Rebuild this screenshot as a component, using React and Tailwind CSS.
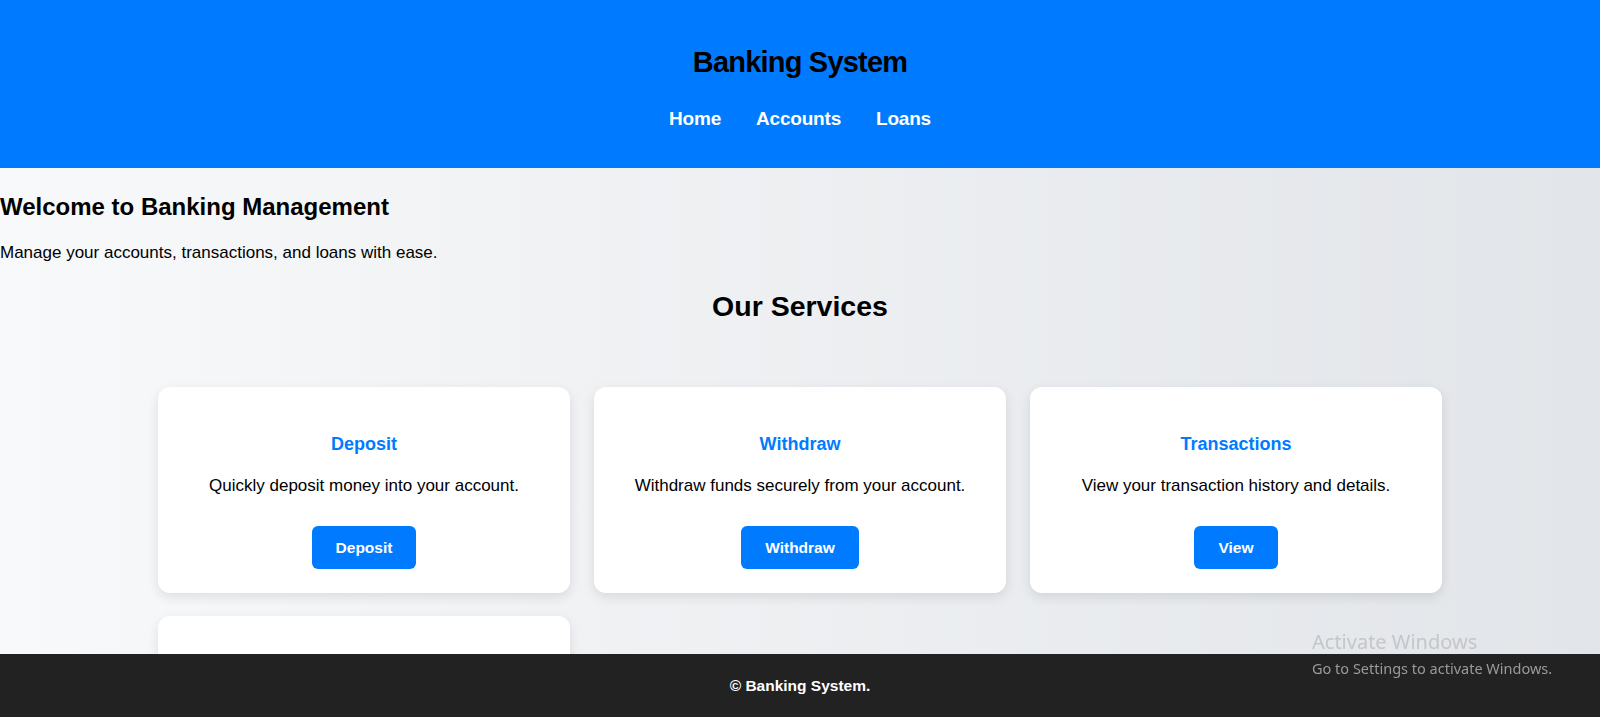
import React from "react";

const services = [
  {
    title: "Deposit",
    text: "Quickly deposit money into your account.",
    action: "Deposit",
  },
  {
    title: "Withdraw",
    text: "Withdraw funds securely from your account.",
    action: "Withdraw",
  },
  {
    title: "Transactions",
    text: "View your transaction history and details.",
    action: "View",
  },
  {
    title: "Loans",
    text: "Apply for loans and track your repayments.",
    action: "Apply",
  },
];

function ServiceCard({ title, text, action }) {
  return (
    <div className="h-[206px] bg-white rounded-[12px] shadow-[0_4px_12px_rgba(0,0,0,0.1)] flex flex-col items-center pt-[46px] text-center">
      <h3 className="text-[18px] leading-[22px] font-bold text-[#007bff]">
        {title}
      </h3>
      <p className="mt-[21px] text-[17px] leading-[20px] text-black">{text}</p>
      <button className="mt-[30px] h-[43px] px-6 rounded-[6px] bg-[#007bff] text-white text-[15.5px] font-bold">
        {action}
      </button>
    </div>
  );
}

export default function App() {
  return (
    <div className="min-h-[900px] bg-gradient-to-r from-[#f8f9fa] to-[#e2e5e9] font-['Liberation_Sans',Arial,sans-serif] text-black">
      {/* Header */}
      <header className="h-[168px] bg-[#007bff] flex flex-col items-center pt-[46px]">
        <h1 className="text-[29px] leading-[32px] font-bold tracking-[-0.8px] text-black">
          Banking System
        </h1>
        <nav className="mt-[30px] flex gap-[35px] text-[19px] leading-[22px] font-bold tracking-[-0.2px] text-white">
          <a href="#">Home</a>
          <a href="#">Accounts</a>
          <a href="#">Loans</a>
        </nav>
      </header>

      {/* Welcome */}
      <section className="mt-[25px]">
        <h2 className="text-[24px] leading-[28px] font-bold">
          Welcome to Banking Management
        </h2>
        <p className="mt-[22px] text-[17px] leading-[20px]">
          Manage your accounts, transactions, and loans with ease.
        </p>
      </section>

      {/* Services */}
      <section className="mt-[27px] pb-[120px]">
        <h2 className="text-center text-[28.5px] leading-[32px] font-bold">
          Our Services
        </h2>
        <div className="mt-[65px] mx-auto w-[1284px] grid grid-cols-3 gap-x-6 gap-y-[23px]">
          {services.map((s) => (
            <ServiceCard key={s.title} {...s} />
          ))}
        </div>
      </section>

      {/* Footer */}
      <footer className="fixed bottom-0 left-0 right-0 h-[63px] bg-[#222222] flex items-center justify-center">
        <p className="text-white text-[15.5px] font-bold">© Banking System.</p>
      </footer>

      {/* Windows watermark */}
      <div className="fixed left-[1312px] top-[629px] font-['Noto_Sans',sans-serif] pointer-events-none">
        <p className="text-[20px] leading-[26px] text-[#c3c6ca]">Activate Windows</p>
        <p className="mt-[3px] text-[14.5px] leading-[20px] text-[#9a9a9a]">
          Go to Settings to activate Windows.
        </p>
      </div>
    </div>
  );
}
